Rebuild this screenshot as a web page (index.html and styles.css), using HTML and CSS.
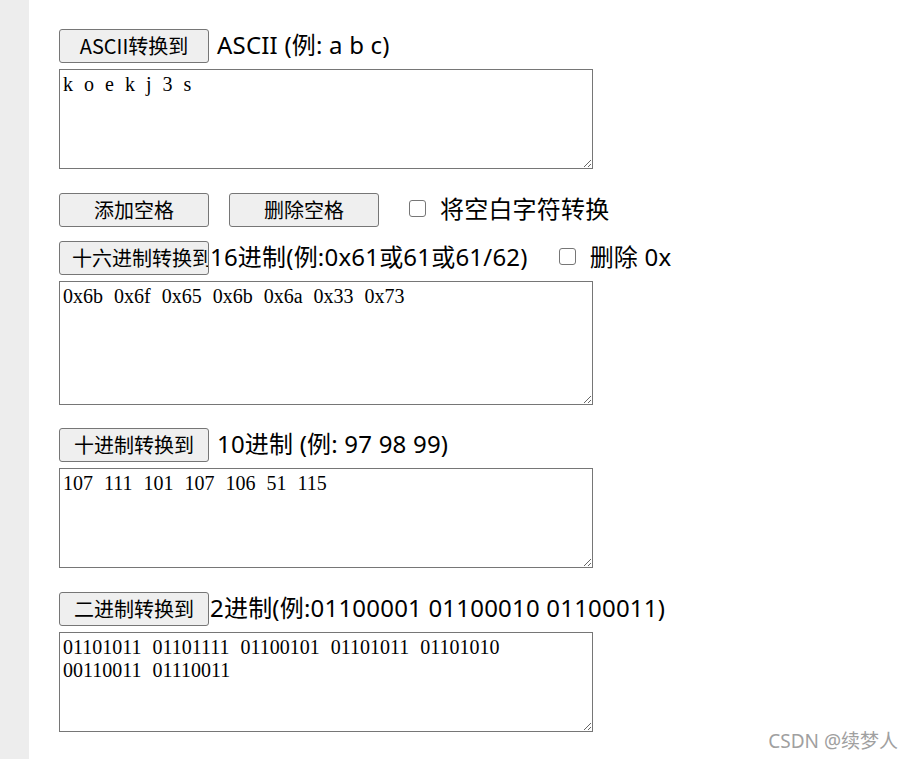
FILE: index.html
```html
<!DOCTYPE html>
<html lang="zh-CN">
<head>
<meta charset="utf-8">
<title>ASCII 转换</title>
<link rel="stylesheet" href="styles.css">
</head>
<body>
<div class="page">
  <div class="rail"></div>
  <main class="tool">
    <div class="row">
      <button class="btn">ASCII转换到</button>
      <span class="label label-spaced">ASCII (例: a b c)</span>
    </div>
    <textarea class="box" spellcheck="false">k o e k j 3 s</textarea>

    <div class="row row-opts">
      <button class="btn">添加空格</button>
      <button class="btn btn-next">删除空格</button>
      <input class="cb cb-after-btn" type="checkbox">
      <span class="label">将空白字符转换</span>
    </div>

    <div class="row row-hex">
      <button class="btn">十六进制转换到</button>
      <span class="label label-tight">16进制(例:0x61或61或61/62)</span>
      <input class="cb cb-after-label" type="checkbox">
      <span class="label">删除 0x</span>
    </div>
    <textarea class="box box-tall" spellcheck="false">0x6b 0x6f 0x65 0x6b 0x6a 0x33 0x73</textarea>

    <div class="row row-sec">
      <button class="btn">十进制转换到</button>
      <span class="label label-spaced">10进制 (例: 97 98 99)</span>
    </div>
    <textarea class="box" spellcheck="false">107 111 101 107 106 51 115</textarea>

    <div class="row row-sec row-last">
      <button class="btn">二进制转换到</button>
      <span class="label label-tight">2进制(例:01100001 01100010 01100011)</span>
    </div>
    <textarea class="box" spellcheck="false">01101011 01101111 01100101 01101011 01101010 00110011 01110011</textarea>
  </main>
  <div class="watermark">CSDN @续梦人</div>
</div>
</body>
</html>
```
FILE: styles.css
```css
html, body {
  margin: 0;
  padding: 0;
  background: #ffffff;
}

body {
  font-family: "Noto Sans", "Noto Sans CJK SC", sans-serif;
  color: #000000;
}

.page {
  position: relative;
  display: flex;
  min-height: 759px;
}

.rail {
  width: 29px;
  flex: 0 0 29px;
  background: #ededed;
}

.tool {
  flex: 1;
  padding: 29px 0 0 30px;
}

.row {
  display: flex;
  align-items: baseline;
  height: 34px;
}

.row-opts {
  margin-top: 24px;
}

.row-hex {
  margin-top: 14px;
}

.row-sec {
  margin-top: 23px;
}

.row-last {
  margin-top: 24px;
}

.btn {
  box-sizing: border-box;
  width: 150px;
  height: 34px;
  flex: 0 0 150px;
  margin: 0;
  padding: 0 12px;
  border: 1px solid #767676;
  border-radius: 3px;
  background: #efefef;
  color: #000000;
  font-family: "Noto Sans CJK SC", "Noto Sans", sans-serif;
  font-size: 20px;
  line-height: 32px;
  white-space: nowrap;
  overflow: hidden;
  text-align: center;
}

.btn-next {
  margin-left: 20px;
}

.label {
  font-size: 24px;
  line-height: 32px;
  letter-spacing: 0.2px;
  white-space: nowrap;
}

.label-spaced {
  margin-left: 8px;
}

.label-tight {
  margin-left: 1px;
}

.cb {
  appearance: none;
  -webkit-appearance: none;
  box-sizing: border-box;
  width: 17px;
  height: 17px;
  margin: 0 14px 3px 0;
  border: 1px solid #767676;
  border-radius: 3px;
  background: #ffffff;
  align-self: center;
}

.cb-after-btn {
  margin-left: 30px;
}

.cb-after-label {
  margin-left: 31px;
}

.box {
  display: block;
  box-sizing: border-box;
  width: 534px;
  height: 100px;
  margin: 6px 0 0 0;
  padding: 3px 14px 2px 3px;
  border: 1px solid #767676;
  border-radius: 0;
  background: #ffffff;
  color: #000000;
  font-family: "Liberation Serif", "Noto Sans CJK SC", serif;
  font-size: 20px;
  line-height: 23px;
  word-spacing: 6px;
  outline: none;
}

.box-tall {
  height: 124px;
}

.watermark {
  position: absolute;
  right: 16px;
  bottom: 5px;
  font-family: "Noto Sans", "Noto Sans CJK SC", sans-serif;
  font-size: 19px;
  color: #a0a0a0;
  white-space: nowrap;
}
```
